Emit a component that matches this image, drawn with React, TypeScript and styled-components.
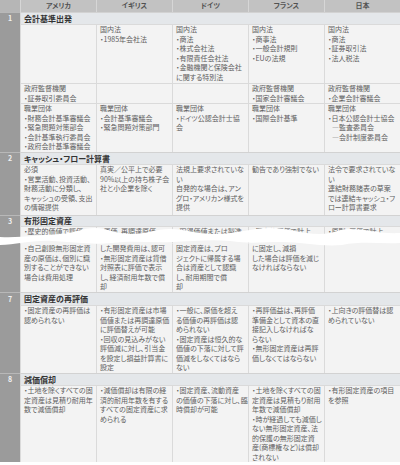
import React from "react";
import styled, { createGlobalStyle } from "styled-components";

const GlobalStyle = createGlobalStyle`
  html, body { margin: 0; padding: 0; background: #ffffff; }
  body { font-family: "Noto Sans CJK JP", "Noto Sans", sans-serif; }
`;

const Table = styled.div`
  position: relative;
  width: 400px;
  font-feature-settings: "palt";
  overflow: hidden;
`;

const HeaderRow = styled.div`
  display: grid;
  grid-template-columns: 20px repeat(5, 1fr);
  height: 12px;
  background: #c2c2c2;
`;

const HeadCell = styled.div`
  font-size: 7px;
  font-weight: 700;
  line-height: 11px;
  color: #525252;
  text-align: center;
  border-left: 1px solid #d6d6d6;
  &:first-child { border-left: none; background: #b6b6b6; }
`;

const Section = styled.section`
  display: flex;
`;

const NumCol = styled.div<{ $cont?: boolean }>`
  width: 20px;
  flex: none;
  background: #9b9b9b;
  border-top: ${(p) => (p.$cont ? "none" : "1px solid #b8b8b8")};
  box-sizing: border-box;
`;

const NumLabel = styled.div<{ $h: number }>`
  height: ${(p) => p.$h - 1}px;
  line-height: ${(p) => p.$h - 1}px;
  font-size: 7px;
  font-weight: 700;
  color: #f2f2f2;
  text-align: center;
`;

const SectionBody = styled.div`
  flex: 1;
  display: flex;
  flex-direction: column;
  min-width: 0;
`;

const Title = styled.div<{ $h: number }>`
  height: ${(p) => p.$h}px;
  line-height: ${(p) => p.$h - 1}px;
  box-sizing: border-box;
  border-top: 1px solid #d2d2d2;
  border-left: 1px solid #d8d8d8;
  background: #e4e7ea;
  padding-left: 3px;
  font-size: 8px;
  font-weight: 700;
  color: #333333;
  white-space: nowrap;
`;

const Row = styled.div<{ $h: number }>`
  display: grid;
  grid-template-columns: repeat(5, 1fr);
  height: ${(p) => p.$h}px;
`;

const Cell = styled.div<{ $cont?: boolean }>`
  box-sizing: border-box;
  background: #f3f3f3;
  border-top: 1px solid ${(p) => (p.$cont ? "#f3f3f3" : "#dadada")};
  border-left: 1px solid #dadada;
  padding: 0 1px 0 3px;
  overflow: hidden;
  min-width: 0;
`;

const Line = styled.div<{ $indent?: boolean }>`
  font-size: 7px;
  line-height: 9.5px;
  color: #606060;
  white-space: nowrap;
  padding-left: ${(p) => (p.$indent ? 4 : 0)}px;
`;

const TearSvg = styled.svg`
  position: absolute;
  left: 0;
  top: 224px;
  width: 400px;
  height: 28px;
  display: block;
`;

type RowData = { h: number; cells: string[][] };
type SectionData = { num?: string; title?: string; titleH?: number; rows: RowData[] };

const columns = ["アメリカ", "イギリス", "ドイツ", "フランス", "日本"];

const sections: SectionData[] = [
  {
    num: "1",
    title: "会計基準出発",
    titleH: 12,
    rows: [
      {
        h: 59,
        cells: [
          [],
          ["国内法", "・1985年会社法"],
          ["国内法", "・商法", "・株式会社法", "・有限責任会社法", "・金融機関と保険会社", "に関する特別法"],
          ["国内法", "・商事法", "・一般会計規則", "・EUの法規"],
          ["国内法", "・商法", "・証券取引法", "・法人税法"],
        ],
      },
      {
        h: 20,
        cells: [
          ["政府監督機関", "・証券取引委員会"],
          [],
          [],
          ["政府監督機関", "・国家会計審議会"],
          ["政府監督機関", "・企業会計審議会"],
        ],
      },
      {
        h: 49,
        cells: [
          ["職業団体", "・財務会計基準審議会", "・緊急問題対策部会", "・会計基準執行委員会", "・政府会計基準審議会"],
          ["職業団体", "・会計基準審議会", "・緊急問題対策部門"],
          ["職業団体", "・ドイツ公認会計士協", "会"],
          ["職業団体", "・国際会計基準"],
          ["職業団体", "・日本公認会計士協会", ">―監査委員会", ">―会計制度委員会"],
        ],
      },
    ],
  },
  {
    num: "2",
    title: "キャッシュ・フロー計算書",
    titleH: 12,
    rows: [
      {
        h: 51,
        cells: [
          ["必須", "・営業活動、投資活動、", "財務活動に分類し、", "キャッシュの受領、支出", "の情報提供"],
          ["真実／公平上で必要", "90%以上の持ち株子会", "社と小企業を除く"],
          ["法規上要求されていな", "い", "自発的な場合は、アン", "グロ・アメリカン様式を", "提供"],
          ["勧告であり強制でない"],
          ["法令で要求されていな", "い", "連結財務諸表の草案", "では連結キャッシュ・フ", "ロー計算書要求"],
        ],
      },
    ],
  },
  {
    num: "3",
    title: "有形固定資産",
    titleH: 11,
    rows: [
      {
        h: 17,
        cells: [
          ["・歴史的価値で評価"],
          ["・原価、再調達原価"],
          ["・取得価値または製造"],
          ["・歴史的原価で計上"],
          ["・原則、原価で計上"],
        ],
      },
    ],
  },
  {
    rows: [
      {
        h: 49,
        cells: [
          ["・自己創設無形固定資", "産の原価は、個別に識", "別することができない", "場合は費用処理"],
          ["した開発費用は、認可", "・無形固定資産は貸借", "対照表に評価で表示", "し、経済耐用年数で償", "却"],
          ["固定資産は、プロ", "ジェクトに帰属する場", "合は資産として認識", "し、耐用期間で償", "却"],
          ["に固定し、減損", "した場合は評価を減じ", "なければならない"],
          [],
        ],
      },
    ],
  },
  {
    num: "7",
    title: "固定資産の再評価",
    titleH: 13,
    rows: [
      {
        h: 68,
        cells: [
          ["・固定資産の再評価は", "認められない"],
          ["・有形固定資産は市場", "価値または再調達原価", "に評価替えが可能", "・回収の見込みがない", "評価減に対し、引当金", "を設定し損益計算書に", "設定"],
          ["・一般に、原価を超え", "る価値の再評価は認", "められない", "・固定資産は恒久的な", "価値の下落に対して評", "価減をしなくてはなら", "ない"],
          ["・再評価益は、再評価", "準備金として資本の直", "接記入しなければな", "らない", "・無形固定資産は再評", "価しなくてはならない"],
          ["・上向きの評価替は認", "められていない"],
        ],
      },
    ],
  },
  {
    num: "8",
    title: "減価償却",
    titleH: 12,
    rows: [
      {
        h: 77,
        cells: [
          ["・土地を除くすべての固", "定資産は見積り耐用年", "数で減価償却"],
          ["・減価償却は有限の経", "済的耐用年数を有する", "すべての固定資産に求", "められる"],
          ["・固定資産、流動資産", "の価値の下落に対し、臨", "時償却が可能"],
          ["・土地を除くすべての固", "定資産は見積もり耐用", "年数で減価償却", "・時が経過しても減価し", "ない無形固定資産、法", "的保護の無形固定資", "産(商標権など)は償却", "されない"],
          ["・有形固定資産の項目", "を参照"],
        ],
      },
    ],
  },
];

const TablePart: React.FC<{ data: SectionData }> = ({ data }) => {
  const cont = !data.title;
  return (
    <Section>
      <NumCol $cont={cont}>{data.num && <NumLabel $h={data.titleH ?? 12}>{data.num}</NumLabel>}</NumCol>
      <SectionBody>
        {data.title && <Title $h={data.titleH ?? 12}>{data.title}</Title>}
        {data.rows.map((row, ri) => (
          <Row key={ri} $h={row.h}>
            {row.cells.map((lines, ci) => (
              <Cell key={ci} $cont={cont}>
                {lines.map((l, li) =>
                  l.startsWith(">") ? (
                    <Line key={li} $indent>
                      {l.slice(1)}
                    </Line>
                  ) : (
                    <Line key={li}>{l}</Line>
                  )
                )}
              </Cell>
            ))}
          </Row>
        ))}
      </SectionBody>
    </Section>
  );
};

const Tear: React.FC = () => (
  <TearSvg viewBox="0 0 400 28" preserveAspectRatio="none" aria-hidden="true">
    <path
      fill="#ffffff"
      d="M0,13 C20,14 40,11 60,10 C75,9 82,4 95,4 C108,4 114,10 130,10 C148,10 155,5 170,5 C185,5 195,10 215,10 C238,10 250,4 270,4 C290,4 300,10 320,10 C334,10 338,5 350,5 C365,5 378,10 400,9 L400,19 C380,20 362,17 342,21 C322,23 302,18 282,18 C262,18 250,20 230,17 C212,15 192,17 172,18 C152,19 132,16 112,19 C92,21 72,18 52,17 C32,16 16,21 0,21 Z"
    />
  </TearSvg>
);

export default function App() {
  return (
    <>
      <GlobalStyle />
      <Table>
        <HeaderRow>
          <HeadCell />
          {columns.map((c) => (
            <HeadCell key={c}>{c}</HeadCell>
          ))}
        </HeaderRow>
        {sections.map((s, i) => (
          <TablePart key={i} data={s} />
        ))}
        <Tear />
      </Table>
    </>
  );
}
